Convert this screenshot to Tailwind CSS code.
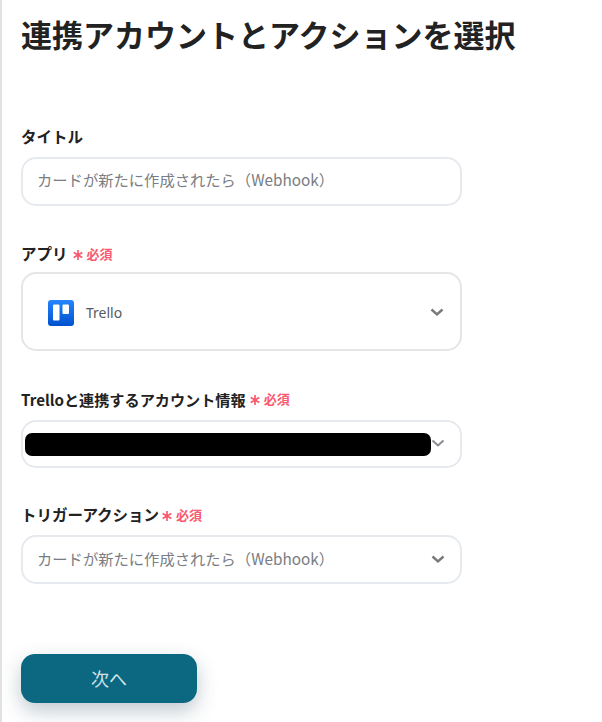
<!DOCTYPE html>
<html lang="ja"><head><meta charset="utf-8">
<script src="https://cdn.jsdelivr.net/npm/@tailwindcss/browser@4"></script></head>
<body class="bg-white">
<main class="w-[602px] h-[722px] overflow-hidden border-l-2 border-[#e2e2e2] pl-[19px] text-[#27272a] font-['Noto_Sans_CJK_JP','Noto_Sans',sans-serif]">
  <h1 class="pt-[11px] h-[126px] text-[31px] leading-[46px] font-bold text-[#222]">連携アカウントとアクションを選択</h1>
  <label class="block h-[21px] text-[15.500px] leading-[20px] font-bold text-[#222]">タイトル</label>
  <div class="mt-[10px] w-[441px] h-[49px] rounded-[15px] border-2 border-[#e6eaef] pl-[14px] pb-[4px] flex items-center text-[15.300px] text-[#7a7d83]">カードが新たに作成されたら（Webhook）</div>

  <div class="mt-[37px] h-[22px] flex items-center text-[15.500px] font-bold text-[#222]">アプリ<span class="ml-[5px] flex items-center text-[13px] font-bold text-[#f9596f]"><svg class="mr-[4px] mt-[2px]" width="10" height="10" viewBox="0 0 10 10" fill="none" stroke="#f9596f" stroke-width="1.700"><path d="M5 0v10M.7 2.500l8.600 5M9.300 2.500l-8.600 5"/></svg>必須</span></div>
  <div class="mt-[7px] w-[441px] h-[79px] rounded-[15px] border-2 border-[#e5e5e5] pl-[25px] pr-[15px] pt-[2px] flex items-center text-[14px] text-[#555a60]">
    <svg class="w-[26px] h-[26px] mr-[12px]" viewBox="0 0 26 26"><defs><linearGradient id="t" x1="0" y1="0" x2="0" y2="1"><stop offset="0" stop-color="#2684ff"/><stop offset="1" stop-color="#0052cc"/></linearGradient></defs><rect width="26" height="26" rx="3" fill="url(#t)"/><rect x="5" y="4.500" width="6.500" height="16" rx="1" fill="#fff"/><rect x="14.500" y="4.500" width="6.500" height="9.500" rx="1" fill="#fff"/></svg>
    <span class="font-['Noto_Sans',sans-serif]">Trello</span>
    <svg class="ml-auto mr-[1px]" width="14" height="9" viewBox="0 0 14 9" fill="none" stroke="#77797d" stroke-width="2.400"><path d="M1.500 1.500 7 6.500l5.500-5"/></svg>
  </div>

  <div class="mt-[37px] h-[22px] flex items-center text-[15.150px] font-bold text-[#222]">Trelloと連携するアカウント情報<span class="ml-[4px] flex items-center text-[13px] font-bold text-[#f9596f]"><svg class="mr-[4px] mt-[2px]" width="10" height="10" viewBox="0 0 10 10" fill="none" stroke="#f9596f" stroke-width="1.700"><path d="M5 0v10M.7 2.500l8.600 5M9.300 2.500l-8.600 5"/></svg>必須</span></div>
  <div class="mt-[10px] w-[441px] h-[48px] rounded-[15px] border-2 border-[#e6eaef] pl-[2px] pr-[15px] flex items-center">
    <div class="w-[406px] h-[23px] rounded-[7px] bg-black"></div>
    <svg class="ml-auto -mt-[2px]" width="14" height="9" viewBox="0 0 14 9" fill="none" stroke="#8a8c90" stroke-width="2"><path d="M1.500 1.500 7 6.500l5.500-5"/></svg>
  </div>

  <div class="mt-[36px] h-[22px] flex items-center text-[15.500px] font-bold text-[#222]">トリガーアクション<span class="ml-[3px] flex items-center text-[13px] font-bold text-[#f9596f]"><svg class="mr-[4px] mt-[2px]" width="10" height="10" viewBox="0 0 10 10" fill="none" stroke="#f9596f" stroke-width="1.700"><path d="M5 0v10M.7 2.500l8.600 5M9.300 2.500l-8.600 5"/></svg>必須</span></div>
  <div class="mt-[9px] w-[441px] h-[49px] rounded-[15px] border-2 border-[#e6eaef] pl-[14px] pr-[15px] flex items-center text-[15.300px] text-[#7a7d83]"><span class="-mt-[3px]">カードが新たに作成されたら（Webhook）</span>
    <svg class="ml-auto" width="14" height="9" viewBox="0 0 14 9" fill="none" stroke="#77797d" stroke-width="2.400"><path d="M1.500 1.500 7 6.500l5.500-5"/></svg>
  </div>

  <button class="mt-[70px] w-[176px] h-[49px] rounded-[14px] bg-[#0b6880] text-[18px] text-[#cfe3e8] shadow-[0_8px_20px_rgba(30,60,80,0.28)] flex items-center justify-center">次へ</button>
</main>
</body></html>
